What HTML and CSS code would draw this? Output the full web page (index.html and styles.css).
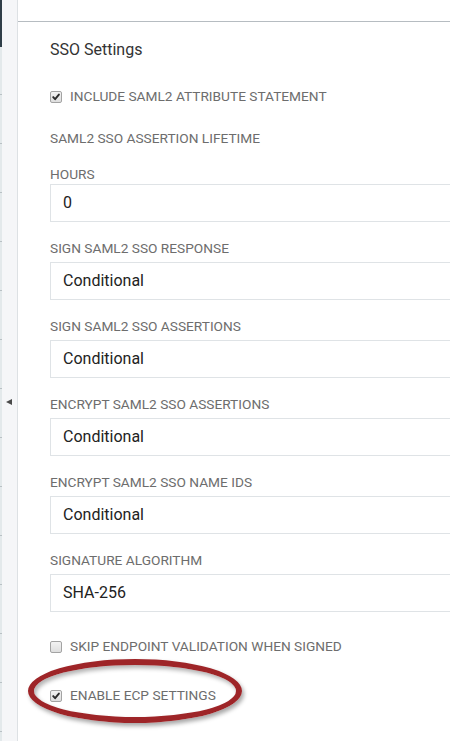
FILE: index.html
```html
<!DOCTYPE html>
<html lang="en">
<head>
<meta charset="utf-8">
<title>SSO Settings</title>
<link rel="stylesheet" href="styles.css">
</head>
<body>
<div class="app">
  <aside class="rail">
    <div class="rail-strip">
      <div class="rail-strip-top"></div>
      <div class="rail-strip-rest"></div>
    </div>
    <div class="rail-panel">
      <span class="collapse-arrow"></span>
    </div>
  </aside>
  <main class="main">
    <div class="topbar"></div>
    <section class="content">
      <h2 class="title">SSO Settings</h2>

      <div class="check-row first-check">
        <span class="cb checked"><svg viewBox="0 0 12 12" width="12" height="12"><path d="M3.2 6.1 L5.1 8.2 L8.9 3.6" fill="none" stroke="#2b2b2b" stroke-width="1.9" stroke-linecap="round" stroke-linejoin="round"/></svg></span>
        <span class="check-label">INCLUDE SAML2 ATTRIBUTE STATEMENT</span>
      </div>

      <div class="label section-label">SAML2 SSO ASSERTION LIFETIME</div>
      <div class="label hours-label">HOURS</div>
      <div class="field hours-field">0</div>

      <div class="label group-label">SIGN SAML2 SSO RESPONSE</div>
      <div class="field">Conditional</div>

      <div class="label group-label">SIGN SAML2 SSO ASSERTIONS</div>
      <div class="field">Conditional</div>

      <div class="label group-label">ENCRYPT SAML2 SSO ASSERTIONS</div>
      <div class="field">Conditional</div>

      <div class="label group-label">ENCRYPT SAML2 SSO NAME IDS</div>
      <div class="field">Conditional</div>

      <div class="label group-label">SIGNATURE ALGORITHM</div>
      <div class="field">SHA-256</div>

      <div class="check-row skip-check">
        <span class="cb"></span>
        <span class="check-label">SKIP ENDPOINT VALIDATION WHEN SIGNED</span>
      </div>

      <div class="check-row ecp-check">
        <span class="cb checked"><svg viewBox="0 0 12 12" width="12" height="12"><path d="M3.2 6.1 L5.1 8.2 L8.9 3.6" fill="none" stroke="#2b2b2b" stroke-width="1.9" stroke-linecap="round" stroke-linejoin="round"/></svg></span>
        <span class="check-label">ENABLE ECP SETTINGS</span>
        <span class="highlight-ring"></span>
      </div>
    </section>
  </main>
</div>
</body>
</html>
```

FILE: styles.css
```css
html, body {
  margin: 0;
  padding: 0;
  background: #ffffff;
}

body {
  font-family: Roboto, "Liberation Sans", Arial, sans-serif;
  width: 450px;
  height: 741px;
  overflow: hidden;
}

.app {
  display: flex;
  height: 741px;
}

.rail {
  display: flex;
  flex: 0 0 18px;
}

.rail-strip {
  display: flex;
  flex-direction: column;
  width: 2px;
}

.rail-strip-top {
  height: 47px;
  background: #2f3e48;
}

.rail-strip-rest {
  flex: 1;
  background-color: #e3e9eb;
  background-image: repeating-linear-gradient(to bottom,
    transparent 0, transparent 47px, #b9c1c5 47px, #b9c1c5 48px, transparent 48px, transparent 49px);
}

.rail-panel {
  width: 15px;
  background: #f5f6f8;
  border-right: 1px solid #dde1e4;
  padding-top: 399px;
  box-sizing: content-box;
}

.collapse-arrow {
  display: block;
  margin-left: 4px;
  width: 0;
  height: 0;
  border-top: 3.5px solid transparent;
  border-bottom: 3.5px solid transparent;
  border-right: 6px solid #4a4a4a;
}

.main {
  flex: 1;
  min-width: 0;
  overflow: hidden;
  position: relative;
}

.topbar {
  height: 21px;
  border-bottom: 1px solid #b6bcc1;
}

.content {
  padding-left: 32px;
  position: relative;
}

.title {
  margin: 18px 0 0;
  font-size: 16px;
  line-height: 20px;
  font-weight: 400;
  color: #333333;
}

.label {
  font-size: 13.7px;
  line-height: 15px;
  color: #6d6d6d;
  white-space: nowrap;
}

.check-row {
  display: flex;
  align-items: center;
  height: 15px;
  position: relative;
}

.check-label {
  font-size: 13.7px;
  line-height: 15px;
  color: #6d6d6d;
  margin-left: 8px;
  white-space: nowrap;
}

.cb {
  box-sizing: border-box;
  width: 12px;
  height: 12px;
  border: 1px solid #a3a3a3;
  border-radius: 2px;
  background: linear-gradient(#f2f2f2, #dedede);
  display: flex;
  align-items: center;
  justify-content: center;
  position: relative;
}

.cb svg {
  position: absolute;
  left: -1px;
  top: -1px;
}

.first-check { margin-top: 29px; }
.section-label { margin-top: 27px; }
.hours-label { margin-top: 21px; }
.hours-field { margin-top: 2px !important; }
.group-label { margin-top: 19px; }

.field {
  margin-top: 6px;
  box-sizing: border-box;
  width: 440px;
  height: 38px;
  border: 1px solid #dfe3e6;
  background: #ffffff;
  padding-left: 12px;
  font-size: 16px;
  line-height: 36px;
  color: #222222;
}

.skip-check { margin-top: 27px; }
.ecp-check { margin-top: 34px; }

.highlight-ring {
  position: absolute;
  left: -22px;
  top: -29px;
  width: 214px;
  height: 64px;
  box-sizing: border-box;
  border: 6px solid #9e2528;
  border-radius: 50%;
  box-shadow: 2px 3px 4px rgba(0, 0, 0, 0.35), inset 2px 3px 4px rgba(0, 0, 0, 0.3);
  pointer-events: none;
}
```
